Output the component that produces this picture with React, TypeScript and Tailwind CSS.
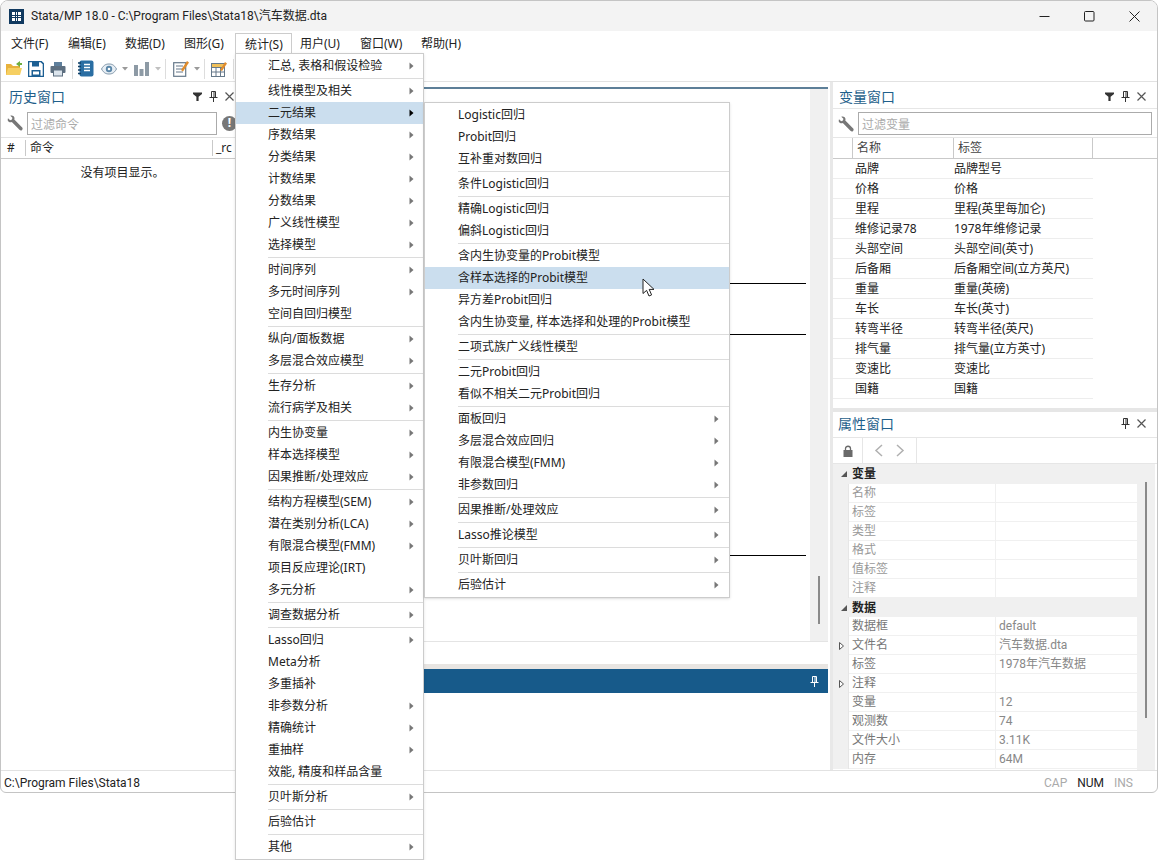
import React from 'react';

type Item = { label: string; arrow?: boolean; sep?: boolean; active?: boolean };

// sep = a separator line sits above the item
const statsMenu: Item[] = [
  { label: '汇总, 表格和假设检验', arrow: true },
  { label: '线性模型及相关', arrow: true, sep: true },
  { label: '二元结果', arrow: true, active: true },
  { label: '序数结果', arrow: true },
  { label: '分类结果', arrow: true },
  { label: '计数结果', arrow: true },
  { label: '分数结果', arrow: true },
  { label: '广义线性模型', arrow: true },
  { label: '选择模型', arrow: true },
  { label: '时间序列', arrow: true, sep: true },
  { label: '多元时间序列', arrow: true },
  { label: '空间自回归模型' },
  { label: '纵向/面板数据', arrow: true, sep: true },
  { label: '多层混合效应模型', arrow: true },
  { label: '生存分析', arrow: true, sep: true },
  { label: '流行病学及相关', arrow: true },
  { label: '内生协变量', arrow: true, sep: true },
  { label: '样本选择模型', arrow: true },
  { label: '因果推断/处理效应', arrow: true },
  { label: '结构方程模型(SEM)', arrow: true, sep: true },
  { label: '潜在类别分析(LCA)', arrow: true },
  { label: '有限混合模型(FMM)', arrow: true },
  { label: '项目反应理论(IRT)' },
  { label: '多元分析', arrow: true },
  { label: '调查数据分析', arrow: true, sep: true },
  { label: 'Lasso回归', arrow: true, sep: true },
  { label: 'Meta分析' },
  { label: '多重插补' },
  { label: '非参数分析', arrow: true },
  { label: '精确统计', arrow: true },
  { label: '重抽样', arrow: true },
  { label: '效能, 精度和样品含量' },
  { label: '贝叶斯分析', arrow: true, sep: true },
  { label: '后验估计', sep: true },
  { label: '其他', arrow: true, sep: true },
];

const binaryMenu: Item[] = [
  { label: 'Logistic回归' },
  { label: 'Probit回归' },
  { label: '互补重对数回归' },
  { label: '条件Logistic回归', sep: true },
  { label: '精确Logistic回归', sep: true },
  { label: '偏斜Logistic回归' },
  { label: '含内生协变量的Probit模型', sep: true },
  { label: '含样本选择的Probit模型', active: true },
  { label: '异方差Probit回归' },
  { label: '含内生协变量, 样本选择和处理的Probit模型' },
  { label: '二项式族广义线性模型', sep: true },
  { label: '二元Probit回归', sep: true },
  { label: '看似不相关二元Probit回归' },
  { label: '面板回归', arrow: true, sep: true },
  { label: '多层混合效应回归', arrow: true },
  { label: '有限混合模型(FMM)', arrow: true },
  { label: '非参数回归', arrow: true },
  { label: '因果推断/处理效应', arrow: true, sep: true },
  { label: 'Lasso推论模型', arrow: true, sep: true },
  { label: '贝叶斯回归', arrow: true, sep: true },
  { label: '后验估计', arrow: true, sep: true },
];

const variables = [
  ['品牌', '品牌型号'],
  ['价格', '价格'],
  ['里程', '里程(英里每加仑)'],
  ['维修记录78', '1978年维修记录'],
  ['头部空间', '头部空间(英寸)'],
  ['后备厢', '后备厢空间(立方英尺)'],
  ['重量', '重量(英磅)'],
  ['车长', '车长(英寸)'],
  ['转弯半径', '转弯半径(英尺)'],
  ['排气量', '排气量(立方英寸)'],
  ['变速比', '变速比'],
  ['国籍', '国籍'],
];

const varProps = ['名称', '标签', '类型', '格式', '值标签', '注释'];

const dataProps: { k: string; v: string; expand?: boolean }[] = [
  { k: '数据框', v: 'default' },
  { k: '文件名', v: '汽车数据.dta', expand: true },
  { k: '标签', v: '1978年汽车数据' },
  { k: '注释', v: '', expand: true },
  { k: '变量', v: '12' },
  { k: '观测数', v: '74' },
  { k: '文件大小', v: '3.11K' },
  { k: '内存', v: '64M' },
];

const menuBar = [
  { label: '文件(F)', w: 'w-[57px]' },
  { label: '编辑(E)', w: 'w-[57px]' },
  { label: '数据(D)', w: 'w-[59px]' },
  { label: '图形(G)', w: 'w-[51px]' },
];

const menuBarRight = [
  { label: '用户(U)', w: 'w-[60px]' },
  { label: '窗口(W)', w: 'w-[61px]' },
  { label: '帮助(H)', w: 'w-[60px]' },
];

const Caret = ({ dark }: { dark?: boolean }) => (
  <svg width="5" height="8" viewBox="0 0 5 8" className={dark ? 'text-black' : 'text-[#777777]'}>
    <path d="M0.5 0.5 L4.5 4 L0.5 7.5 Z" fill="currentColor" />
  </svg>
);

const MenuRows = ({ items, textPad, arrowPad }: { items: Item[]; textPad: string; arrowPad: string }) => (
  <>
    {items.map((item) => (
      <React.Fragment key={item.label}>
        {item.sep && (
          <div className={`h-[3px] flex items-center ${textPad}`}>
            <div className="h-px w-full bg-[#dcdcdc]" />
          </div>
        )}
        <div className={`h-[22px] flex items-center justify-between ${textPad} ${arrowPad} ${item.active ? 'bg-[#cbdeee]' : ''}`}>
          <span className="whitespace-nowrap">{item.label}</span>
          {item.arrow && <Caret dark={item.active} />}
        </div>
      </React.Fragment>
    ))}
  </>
);

const Funnel = () => (
  <svg width="9" height="9" viewBox="0 0 9 9"><path d="M0 0.5 H9 V2 L5.6 4.8 V9 H3.4 V4.8 L0 2 Z" fill="#333333" /></svg>
);

const Pin = ({ color = '#333333' }: { color?: string }) => (
  <svg width="9" height="11" viewBox="0 0 9 11" fill="none" stroke={color}>
    <path d="M2.5 0.5 H6.5 V6.5 H2.5 Z M5 1 V6 M0.5 6.5 H8.5 M4.5 7 V11" />
  </svg>
);

const Close = () => (
  <svg width="9" height="9" viewBox="0 0 9 9" stroke="#555555" strokeWidth="1.2"><path d="M0.5 0.5 L8.5 8.5 M8.5 0.5 L0.5 8.5" /></svg>
);

const Wrench = () => (
  <svg width="16" height="16" viewBox="0 0 16 16">
    <path d="M1 3.2 L3.2 5.2 L5 4.6 L5.4 2.8 L3.3 0.8 C5 0 7 0.8 7.4 2.6 C7.6 3.4 7.5 4 7.3 4.6 L15.2 12.5 C15.8 13.2 15.8 14.2 15.1 14.9 C14.4 15.6 13.4 15.6 12.7 15 L4.8 7.1 C3.2 7.7 1.8 7.2 1 6 C0.6 5.2 0.7 4 1 3.2 Z" fill="#777777" />
  </svg>
);

const PanelTitle = ({ title, funnel, gap, height }: { title: string; funnel?: boolean; gap: string; height: string }) => (
  <div className={`${height} shrink-0 flex items-center justify-between ${gap}`}>
    <span className="text-[14px] text-[#1f5f8b] whitespace-nowrap">{title}</span>
    <div className="flex items-center gap-[7px]">
      {funnel && <Funnel />}
      <Pin />
      <Close />
    </div>
  </div>
);

const Toolbar = () => (
  <div className="h-[26px] shrink-0 flex items-center pl-[4px] border-b border-[#e2e2e2]">
    {/* folder */}
    <svg width="18" height="17" viewBox="0 0 18 17" className="mr-[5px]">
      <path d="M1 4 H6 L8 6 H15 V15 H1 Z" fill="#e8b23c" />
      <path d="M1 15 L3 8 H17 L15 15 Z" fill="#f6cf62" />
      <path d="M11 4 L15 1 V3 H17 V5 H15 V7 Z" fill="#6fae3f" />
    </svg>
    {/* save */}
    <svg width="16" height="16" viewBox="0 0 16 16" className="mr-[6px]">
      <path d="M0.5 0.5 H13 L15.5 3 V15.5 H0.5 Z" fill="#ffffff" stroke="#1c5f93" strokeWidth="1.6" />
      <rect x="4" y="1" width="7" height="4.5" fill="#1c5f93" />
      <rect x="3.5" y="9" width="9" height="6" fill="#1c5f93" />
      <rect x="5" y="10.5" width="6" height="3" fill="#ffffff" />
    </svg>
    {/* print */}
    <svg width="16" height="16" viewBox="0 0 16 16">
      <rect x="4" y="1" width="8" height="4" fill="#5e7f9c" />
      <rect x="0.5" y="5" width="15" height="7" rx="1" fill="#5d6f80" />
      <rect x="3.5" y="9" width="9" height="6" fill="#dbe4ec" stroke="#5d6f80" />
    </svg>
    <div className="w-px h-[20px] bg-[#dddddd] ml-[6px] mr-[5px]" />
    {/* notebook */}
    <svg width="16" height="17" viewBox="0 0 16 17">
      <rect x="1.5" y="0.5" width="14" height="16" rx="2" fill="#2a6ea3" />
      <path d="M0 3 H3 M0 6.5 H3 M0 10 H3 M0 13.5 H3" stroke="#0f3f66" strokeWidth="1.3" />
      <path d="M6 4.5 H12 M6 7.5 H12 M6 10.5 H12" stroke="#ffffff" strokeWidth="1.3" />
    </svg>
    {/* eye */}
    <svg width="16" height="12" viewBox="0 0 16 12" className="ml-[7px]">
      <path d="M0.5 6 C3 1.5 5.5 1 8 1 C10.5 1 13 1.5 15.5 6 C13 10.5 10.5 11 8 11 C5.5 11 3 10.5 0.5 6 Z" fill="#e7eef4" stroke="#7f95a8" />
      <circle cx="8" cy="6" r="3.2" fill="#5a86a8" />
      <circle cx="8" cy="6" r="1.3" fill="#ffffff" />
    </svg>
    <svg width="6" height="4" viewBox="0 0 6 4" className="ml-[5px]"><path d="M0 0 H6 L3 3.5 Z" fill="#9a9a9a" /></svg>
    {/* chart */}
    <svg width="15" height="15" viewBox="0 0 15 15" className="ml-[6px]">
      <rect x="0" y="4" width="4" height="11" fill="#8d9aa5" />
      <rect x="5.5" y="8" width="4" height="7" fill="#8d9aa5" />
      <rect x="11" y="1" width="4" height="14" fill="#8d9aa5" />
    </svg>
    <svg width="6" height="4" viewBox="0 0 6 4" className="ml-[6px]"><path d="M0 0 H6 L3 3.5 Z" fill="#c0c0c0" /></svg>
    <div className="w-px h-[20px] bg-[#dddddd] ml-[4px] mr-[7px]" />
    {/* edit */}
    <svg width="16" height="17" viewBox="0 0 16 17">
      <rect x="0.7" y="2.7" width="12" height="13.6" fill="#ffffff" stroke="#66798a" strokeWidth="1.2" />
      <path d="M3 6 H10 M3 9 H10 M3 12 H10" stroke="#66798a" />
      <path d="M8 10 L14 1 L16 2.5 L10 11.5 Z" fill="#e08c2d" />
    </svg>
    <svg width="6" height="4" viewBox="0 0 6 4" className="ml-[5px]"><path d="M0 0 H6 L3 3.5 Z" fill="#9a9a9a" /></svg>
    <div className="w-px h-[20px] bg-[#dddddd] ml-[4px] mr-[6px]" />
    {/* table */}
    <svg width="16" height="16" viewBox="0 0 16 16">
      <rect x="0.5" y="2.5" width="13" height="13" fill="#ffffff" stroke="#66798a" />
      <path d="M0.5 6.5 H13.5 M0.5 11 H13.5 M5 2.5 V15.5 M9.5 2.5 V15.5" stroke="#66798a" />
      <rect x="1" y="3" width="12" height="3" fill="#f0c05a" />
      <path d="M9 9 L14 1 L16 2.5 L11 10 Z" fill="#e08c2d" />
    </svg>
    <div className="w-px h-[20px] bg-[#dddddd] ml-[6px]" />
  </div>
);

const HistoryPanel = () => (
  <div className="w-[236px] shrink-0 flex flex-col overflow-hidden">
    <PanelTitle title="历史窗口" funnel gap="pl-[8px] pr-[3px] pt-[2px]" height="h-[26px]" />
    <div className="h-[30px] shrink-0 flex items-center pt-px pl-[6px] gap-[4px] border-b border-[#e2e2e2]">
      <Wrench />
      <div className="w-[190px] h-[23px] border border-[#ababab] flex items-center pl-[3px] pt-[3px] text-[#aaaaaa]">过滤命令</div>
      <div className="w-[15px] h-[15px] rounded-full bg-[#777777] text-white font-bold text-[12px] flex items-center justify-center ml-[1px]">!</div>
    </div>
    <div className="h-[21px] shrink-0 flex items-center border-b border-[#c9c9c9]">
      <div className="w-[25px] pl-[6px] border-r border-[#c9c9c9] h-[16px] leading-[16px]">#</div>
      <div className="w-[187px] pl-[4px] border-r border-[#c9c9c9] h-[16px] leading-[16px]">命令</div>
      <div className="pl-[3px]">_rc</div>
    </div>
    <div className="h-[28px] shrink-0 flex items-center justify-center pl-[7px]">没有项目显示。</div>
  </div>
);

const CenterPanel = () => (
  <div className="flex-1 min-w-0 flex flex-col ml-[2px] mr-[2px]">
    <div className="h-[7px] shrink-0 border-b-2 border-[#5d7f98]" />
    <div className="h-[553px] shrink-0 flex border-b border-[#e4e4e4]">
      <div className="flex-1 flex flex-col items-end pr-[4px]">
        <div className="w-[77px] h-px bg-black mt-[194px]" />
        <div className="w-[77px] h-px bg-black mt-[50px]" />
        <div className="w-[77px] h-px bg-black mt-[220px]" />
      </div>
      <div className="w-[18px] bg-[#f0f0f0] flex flex-col items-center">
        <div className="w-[2px] h-[48px] bg-[#8a8a8a] mt-[487px]" />
      </div>
    </div>
    <div className="h-[22px] shrink-0" />
    <div className="h-[5px] shrink-0 bg-[#e8e5e2]" />
    <div className="h-[24px] shrink-0 bg-[#175a8a] flex items-center justify-end pr-[9px]">
      <Pin color="#ffffff" />
    </div>
    <div className="flex-1" />
  </div>
);

const VariablesPanel = () => (
  <div className="h-[326px] shrink-0 flex flex-col">
    <PanelTitle title="变量窗口" funnel gap="pl-[6px] pr-[11px] pt-[2px]" height="h-[26px]" />
    <div className="h-[30px] shrink-0 flex items-center pt-px pl-[5px] gap-[4px] bg-white border-y border-[#e6e6e6]">
      <Wrench />
      <div className="w-[294px] h-[23px] border border-[#ababab] flex items-center pl-[3px] pt-[2px] text-[#aaaaaa]">过滤变量</div>
    </div>
    <div className="h-[21px] shrink-0 flex items-center border-b border-[#c9c9c9] pl-[19px] text-[#444444]">
      <div className="w-[101px] pl-[4px] border-l border-[#c9c9c9] h-[20px] leading-[20px]">名称</div>
      <div className="w-[140px] pl-[4px] border-x border-[#c9c9c9] h-[20px] leading-[20px]">标签</div>
    </div>
    {variables.map(([name, label]) => (
      <div key={name} className="w-[260px] h-[20px] shrink-0 flex items-center border-b border-[#ededed] pl-[22px]">
        <div className="w-[99px] whitespace-nowrap">{name}</div>
        <div className="whitespace-nowrap">{label}</div>
      </div>
    ))}
  </div>
);

const SectionHead = ({ title, height }: { title: string; height: string }) => (
  <div className={`${height} shrink-0 flex items-center bg-[#f0f0f0] font-bold text-[#222222]`}>
    <svg width="6" height="6" viewBox="0 0 6 6" className="ml-[8px] mr-[5px]"><path d="M6 0 V6 H0 Z" fill="#555555" /></svg>
    {title}
  </div>
);

const PropRow = ({ k, v, expand, dim }: { k: string; v?: string; expand?: boolean; dim?: boolean }) => (
  <div className="h-[19px] shrink-0 flex">
    <div className="w-[16px] bg-[#f0f0f0] flex items-center justify-center pl-[2px] border-r border-[#e6e6e6]">
      {expand && <svg width="5" height="8" viewBox="0 0 5 8" fill="#ffffff" stroke="#555555"><path d="M0.5 0.5 L4.5 4 L0.5 7.5 Z" /></svg>}
    </div>
    <div className={`w-[147px] pl-[3px] border-b border-r border-[#f0f0f0] leading-[18px] ${dim ? 'text-[#999999]' : 'text-[#777777]'}`}>{k}</div>
    <div className="flex-1 pl-[3px] border-b border-[#f0f0f0] leading-[18px] text-[#888888] whitespace-nowrap font-['Roboto','Noto_Sans_CJK_SC',sans-serif]">{v}</div>
  </div>
);

const PropertiesPanel = () => (
  <div className="flex-1 min-h-0 flex flex-col overflow-hidden">
    <PanelTitle title="属性窗口" gap="pl-[5px] pr-[11px] pb-[2px]" height="h-[25px]" />
    <div className="h-[27px] shrink-0 flex items-center border-y border-[#e6e6e6]">
      <div className="w-[30px] h-full flex items-center justify-center border-r border-[#e6e6e6]">
        <svg width="10" height="12" viewBox="0 0 10 12">
          <path d="M2.5 5 V3.5 C2.5 0.5 7.5 0.5 7.5 3.5 V5" fill="none" stroke="#6a6a6a" strokeWidth="1.3" />
          <rect x="0.5" y="5" width="9" height="7" fill="#6a6a6a" />
        </svg>
      </div>
      <div className="w-[54px] h-full flex items-center justify-center gap-[13px] border-r border-[#e6e6e6]">
        <svg width="9" height="13" viewBox="0 0 9 13" fill="none" stroke="#b0b0b0" strokeWidth="1.5"><path d="M8 1 L2 6.5 L8 12" /></svg>
        <svg width="9" height="13" viewBox="0 0 9 13" fill="none" stroke="#b0b0b0" strokeWidth="1.5"><path d="M1 1 L7 6.5 L1 12" /></svg>
      </div>
    </div>
    <div className="flex-1 min-h-0 flex">
      <div className="w-[304px] shrink-0 flex flex-col">
        <SectionHead title="变量" height="h-[20px]" />
        {varProps.map((k) => <PropRow key={k} k={k} dim />)}
        <SectionHead title="数据" height="h-[19px]" />
        {dataProps.map((p) => <PropRow key={p.k} k={p.k} v={p.v} expand={p.expand} />)}
      </div>
      <div className="w-[18px] bg-[#f0f0f0] flex flex-col items-center">
        <div className="w-[2px] h-[236px] bg-[#8a8a8a] mt-[18px]" />
      </div>
    </div>
  </div>
);

export default function App() {
  return (
    <div className="relative w-[1158px] h-[860px] bg-white overflow-hidden text-[12px] text-[#222222] font-['Noto_Sans','Noto_Sans_CJK_SC',sans-serif]">
      <div className="h-[793px] flex flex-col border border-[#c4c4c4] rounded-t-[8px] rounded-b-[6px] overflow-hidden">
        {/* title bar */}
        <div className="h-[30px] shrink-0 bg-[#f3f3f3] flex items-center justify-between">
          <div className="flex items-center pl-[8px] gap-[7px]">
            <svg width="15" height="15" viewBox="0 0 15 15">
              <rect width="15" height="15" fill="#10395f" />
              <path d="M3 3 H6 V6 H3 Z M7 3 H8 V6 H7 Z M9 3 H12 V6 H9 Z M3 7 H6 V8 H3 Z M7 7 H8 V8 H7 Z M9 7 H12 V8 H9 Z M3 9 H6 V12 H3 Z M7 9 H8 V12 H7 Z M9 9 H12 V12 H9 Z" fill="#ffffff" />
            </svg>
            <span className="whitespace-nowrap font-['Roboto','Noto_Sans_CJK_SC',sans-serif]">Stata/MP 18.0 - C:\Program Files\Stata18\汽车数据.dta</span>
          </div>
          <div className="flex items-center pr-[17px] gap-[34px]">
            <svg width="11" height="11" viewBox="0 0 11 11" stroke="#222222"><path d="M0.5 5.5 H10.5" /></svg>
            <svg width="11" height="11" viewBox="0 0 11 11" fill="none" stroke="#222222"><rect x="0.5" y="0.5" width="9.5" height="9.5" rx="1" /></svg>
            <svg width="11" height="11" viewBox="0 0 11 11" stroke="#222222"><path d="M0.5 0.5 L10.5 10.5 M10.5 0.5 L0.5 10.5" /></svg>
          </div>
        </div>
        {/* menu bar */}
        <div className="h-[25px] shrink-0 flex items-center pl-[10px]">
          {menuBar.map((m) => <div key={m.label} className={m.w}>{m.label}</div>)}
          <div className="w-[57px] h-[23px] mt-[2px] border border-b-0 border-[#cccccc] flex items-center pl-[9px]">统计(S)</div>
          <div className="w-[8px]" />
          {menuBarRight.map((m) => <div key={m.label} className={m.w}>{m.label}</div>)}
        </div>
        <Toolbar />
        {/* dock area */}
        <div className="flex-1 min-h-0 flex">
          <HistoryPanel />
          <CenterPanel />
          <div className="w-[327px] shrink-0 flex flex-col border-l-[3px] border-[#e8e8e8]">
            <VariablesPanel />
            <div className="h-[4px] shrink-0 bg-[#e6e6e6]" />
            <PropertiesPanel />
          </div>
        </div>
        {/* status bar */}
        <div className="h-[22px] shrink-0 border-t border-[#e2e2e2] flex items-center justify-between pt-[2px] pl-[3px] pr-[24px] font-['Roboto','Noto_Sans_CJK_SC',sans-serif]">
          <span>C:\Program Files\Stata18</span>
          <div className="flex gap-[10px]">
            <span className="text-[#aaaaaa]">CAP</span>
            <span>NUM</span>
            <span className="text-[#aaaaaa]">INS</span>
          </div>
        </div>
      </div>

      {/* open menus */}
      <div className="absolute left-[235px] top-[53px] w-[189px] bg-white border border-[#cccccc] pt-px pb-px shadow-sm">
        <MenuRows items={statsMenu} textPad="pl-[32px]" arrowPad="pr-[9px]" />
      </div>
      <div className="absolute left-[424px] top-[102px] w-[306px] bg-white border border-[#cccccc] pt-px pb-px shadow-sm">
        <MenuRows items={binaryMenu} textPad="pl-[33px]" arrowPad="pr-[10px]" />
      </div>
      {/* mouse pointer */}
      <svg width="13" height="20" viewBox="0 0 13 20" className="absolute left-[642px] top-[278px]">
        <path d="M1 1 V15.5 L4.6 12.4 L7 18 L9.6 16.9 L7.2 11.4 H12 Z" fill="#ffffff" stroke="#222222" />
      </svg>
    </div>
  );
}
